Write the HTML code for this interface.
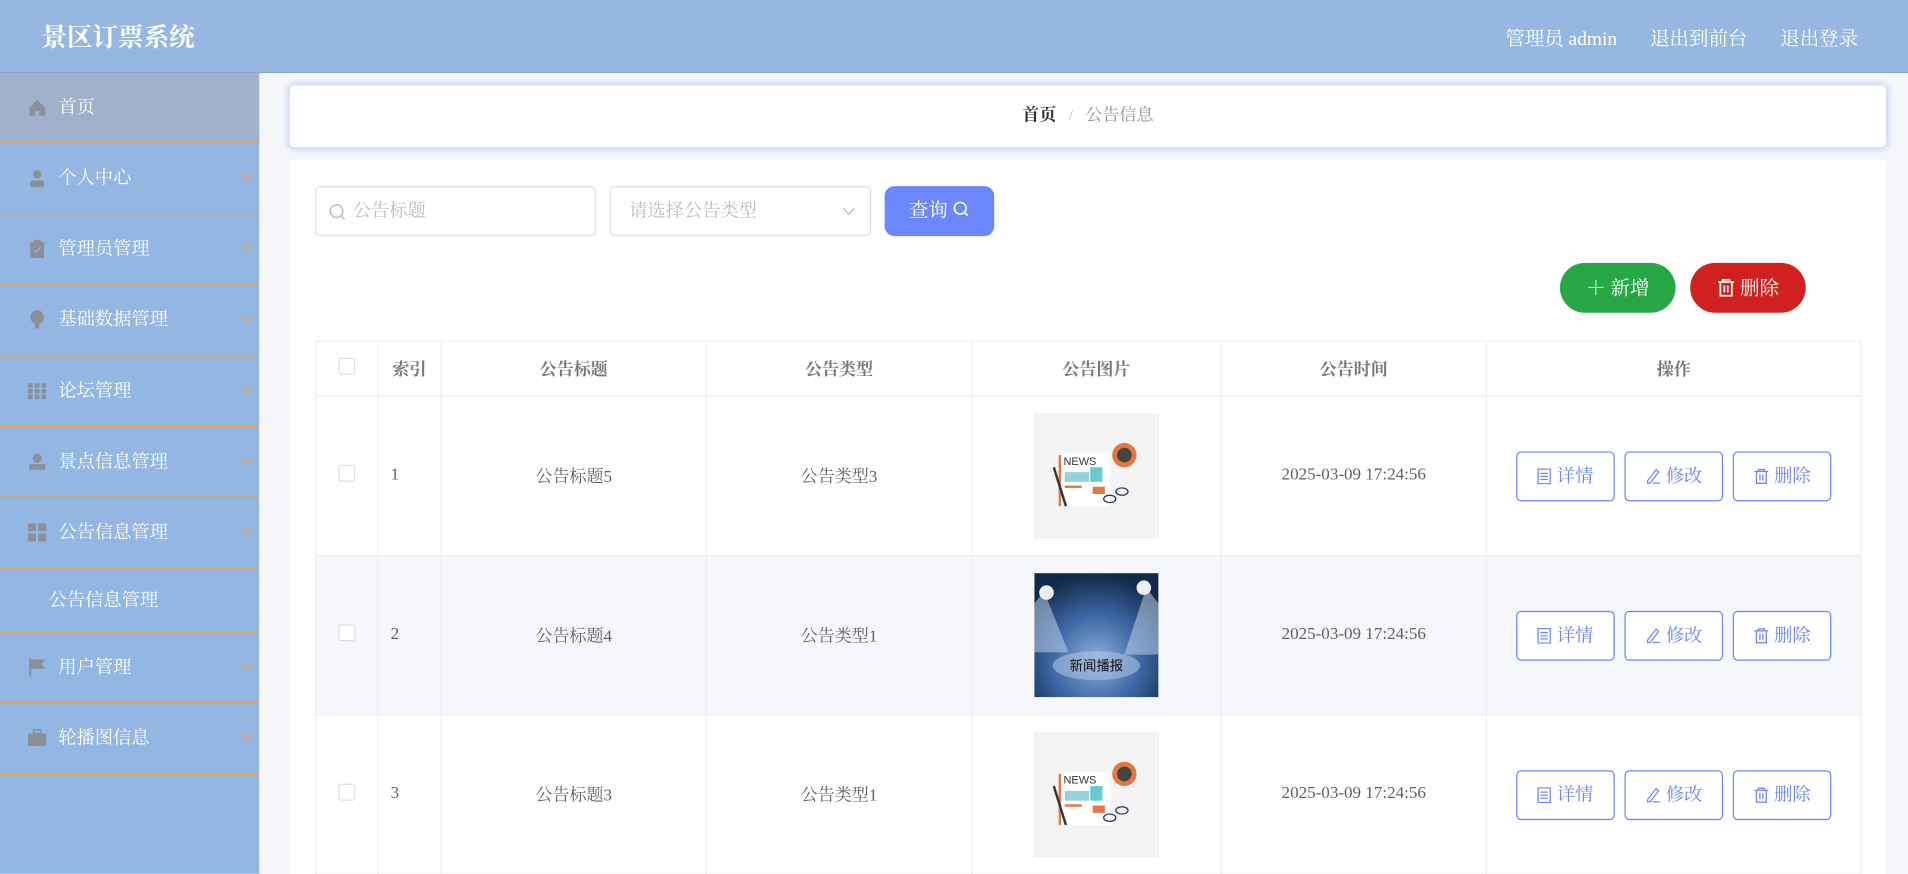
<!DOCTYPE html>
<html><head><meta charset="utf-8"><style>
*{box-sizing:border-box;margin:0;padding:0}
html,body{width:1908px;height:874px;overflow:hidden;background:#f4f6fa}
#w{width:1568px;height:718px;transform:scale(1.21684);transform-origin:0 0;position:relative;font-family:"Liberation Serif","Noto Serif CJK SC",serif;color:#606266}
.hd{position:absolute;left:0;top:0;width:1568px;height:60px;background:#95b7e2;border-bottom:1px solid #8aa5cc}
.hd .t{position:absolute;left:34px;top:15px;font-size:21px;font-weight:bold;color:#fff}
.hd .r{position:absolute;top:19px;font-size:16px;color:#fff}
.sb{position:absolute;left:0;top:60px;width:213px;height:658px;background:#93b6e2}
.it{height:58.4px;border-bottom:1px solid #f0a040;position:relative;color:#fff;font-size:15px;line-height:58px;padding-left:48px}
.it.a{background:#a1b1cb;height:57.5px}
.it .ic{position:absolute;left:23px;top:21px;width:15px;height:15px}
.it .ch{position:absolute;right:6px;top:22px;width:7px;height:7px;border-right:1px solid #f0a040;border-bottom:1px solid #f0a040;transform:rotate(45deg)}
.it .ch.u{transform:rotate(-135deg);top:26px}
.sub{height:52px;line-height:52px;padding-left:40px;color:#fff;font-size:15px;border-bottom:1px solid #f0a040}
.bc{position:absolute;left:238px;top:70px;width:1312px;height:51px;background:#fff;border-radius:4px;box-shadow:0 0 6px #a8b4f8;text-align:center;line-height:51px;font-size:14px}
.card{position:absolute;left:238px;top:132px;width:1312px;height:600px;background:#fff}
.inp{position:absolute;top:153px;height:41px;border:1px solid #dcdfe6;border-radius:4px;background:#fff;font-size:15px;color:#b8bcc4;line-height:41px}
.btn{position:absolute;color:#fff;font-size:16px;text-align:center}
table{position:absolute;left:259px;top:280px;width:1271px;border-collapse:collapse;font-size:14px}
td,th{border:1px solid #ebeef5;text-align:center;color:#606266}
th{height:45px;font-weight:bold;color:#777}
td{height:131px}
tr.g td{background:#f5f7fa}
.cb{display:inline-block;width:14px;height:14px;border:1px solid #dcdfe6;border-radius:2px;background:#fff}
.ops{font-size:0;white-space:nowrap}
.ob{display:inline-block;width:81px;height:41px;border:1px solid #6c84f8;border-radius:4px;color:#6c84f8;font-size:15px;line-height:41px;margin:0 4px;background:#fff}
.ob svg{vertical-align:-2px;margin-right:4px}
.img{display:inline-block;width:102px;height:102px;vertical-align:middle}
</style></head><body><div id="w">
<div class="hd"><div class="t">景区订票系统</div>
<div class="r" style="left:1237px">管理员 admin</div><div class="r" style="left:1356px">退出到前台</div><div class="r" style="left:1463px">退出登录</div></div>
<div class="sb">
<div class="it a"><svg class="ic" viewBox="0 0 16 16"><path d="M1 8L8 1l7 7v7H10v-4H6v4H1z" fill="#8a8f99"/></svg>首页</div>
<div class="it"><svg class="ic" viewBox="0 0 16 16"><circle cx="8" cy="4.5" r="3.5" fill="#8a8f99"/><rect x="2" y="10" width="12" height="6" rx="2" fill="#8a8f99"/></svg>个人中心<i class="ch"></i></div>
<div class="it"><svg class="ic" viewBox="0 0 16 16"><rect x="2" y="2" width="12" height="14" fill="#8a8f99"/><rect x="5" y="0" width="6" height="3" fill="#8a8f99"/><path d="M5 9l2 2 4-4" stroke="#a0b4d0" fill="none"/></svg>管理员管理<i class="ch"></i></div>
<div class="it"><svg class="ic" viewBox="0 0 16 16"><ellipse cx="8" cy="6" rx="6" ry="6" fill="#8a8f99"/><rect x="6" y="12" width="4" height="4" fill="#8a8f99"/></svg>基础数据管理<i class="ch"></i></div>
<div class="it"><svg class="ic" viewBox="0 0 16 16" fill="#8a8f99"><rect x="0" y="1" width="4" height="4"/><rect x="6" y="1" width="4" height="4"/><rect x="12" y="1" width="4" height="4"/><rect x="0" y="6" width="4" height="4"/><rect x="6" y="6" width="4" height="4"/><rect x="12" y="6" width="4" height="4"/><rect x="0" y="11" width="4" height="4"/><rect x="6" y="11" width="4" height="4"/><rect x="12" y="11" width="4" height="4"/></svg>论坛管理<i class="ch"></i></div>
<div class="it"><svg class="ic" viewBox="0 0 16 16" fill="#8a8f99"><circle cx="8" cy="5" r="4"/><rect x="1" y="10" width="14" height="5"/></svg>景点信息管理<i class="ch"></i></div>
<div class="it"><svg class="ic" viewBox="0 0 16 16" fill="#8a8f99"><rect x="0" y="0" width="7" height="7"/><rect x="9" y="0" width="7" height="7"/><rect x="0" y="9" width="7" height="7"/><rect x="9" y="9" width="7" height="7"/></svg>公告信息管理<i class="ch u"></i></div>
<div class="sub">公告信息管理</div>
<div class="it"><svg class="ic" viewBox="0 0 16 16" fill="#8a8f99"><rect x="1" y="0" width="2" height="16"/><path d="M3 1h12l-3 4 3 4H3z"/></svg>用户管理<i class="ch"></i></div>
<div class="it"><svg class="ic" viewBox="0 0 16 16" fill="#8a8f99"><rect x="0" y="4" width="16" height="11" rx="1"/><rect x="5" y="1" width="6" height="3" fill="none" stroke="#8a8f99" stroke-width="1.5"/></svg>轮播图信息<i class="ch"></i></div>
</div>
<div class="bc"><b style="color:#303133">首页</b><span style="color:#c0c4cc;margin:0 10px">/</span><span style="color:#909399">公告信息</span></div>
<div class="card"></div>
<div class="inp" style="left:259px;width:231px;padding-left:30px"><svg style="position:absolute;left:10px;top:13px" width="15" height="15" viewBox="0 0 16 16"><circle cx="7" cy="7" r="5.5" stroke="#b8bcc4" stroke-width="1.3" fill="none"/><path d="M11 11l3 3" stroke="#b8bcc4" stroke-width="1.3"/></svg>公告标题</div>
<div class="inp" style="left:501px;width:215px;padding-left:15px">请选择公告类型<i style="position:absolute;right:14px;top:14px;width:7px;height:7px;border-right:1px solid #b8bcc4;border-bottom:1px solid #b8bcc4;transform:rotate(45deg)"></i></div>
<div class="btn" style="left:727px;top:153px;width:90px;height:41px;line-height:41px;background:#6b87fb;border-radius:8px">查询 <svg width="14" height="14" viewBox="0 0 16 16" style="vertical-align:-1px"><circle cx="7" cy="7" r="5.5" stroke="#fff" stroke-width="1.5" fill="none"/><path d="M11 11l3 3" stroke="#fff" stroke-width="1.5"/></svg></div>
<div class="btn" style="left:1282px;top:216px;width:95px;height:41px;line-height:43px;background:#27a745;border-radius:21px">＋ 新增</div>
<div class="btn" style="left:1389px;top:216px;width:95px;height:41px;line-height:43px;background:#d02020;border-radius:21px"><svg width="15" height="15" viewBox="0 0 16 16" style="vertical-align:-2px"><path d="M1 3h14M5 3V1h6v2M3 3v12h10V3M6.5 6v6M9.5 6v6" stroke="#fff" stroke-width="1.5" fill="none"/></svg> 删除</div>
<table>
<tr><th style="width:51px"><span class="cb"></span></th><th style="width:52px">索引</th><th style="width:218px">公告标题</th><th style="width:218px">公告类型</th><th style="width:205px">公告图片</th><th style="width:218px">公告时间</th><th>操作</th></tr>
<tr><td><span class="cb"></span></td><td style="text-align:left;padding-left:10px">1</td><td>公告标题5</td><td>公告类型3</td><td><svg class="img" viewBox="0 0 102 102"><rect width="102" height="102" fill="#f4f4f4" stroke="#e4e4e4"/><rect x="22" y="32" width="40" height="44" fill="#fff"/><rect x="20" y="34" width="2" height="42" fill="#e57840"/><text x="24" y="42" font-size="9" font-family="Liberation Sans" fill="#333">NEWS</text><rect x="25" y="48" width="20" height="8" fill="#93d3dc"/><rect x="25" y="59" width="14" height="2" fill="#e57840"/><rect x="46" y="44" width="10" height="12" fill="#6cc"/><rect x="48" y="60" width="10" height="6" fill="#e57840"/><circle cx="74" cy="34" r="10" fill="#e57840"/><circle cx="74" cy="34" r="6" fill="#444"/><path d="M16 44l10 32" stroke="#334" stroke-width="2"/><ellipse cx="62" cy="70" rx="5" ry="3" fill="none" stroke="#235"/><ellipse cx="72" cy="64" rx="5" ry="3" fill="none" stroke="#235"/></svg></td><td>2025-03-09 17:24:56</td><td class="ops"><span class="ob"><svg width="12" height="13" viewBox="0 0 12 13"><rect x="1" y="0.5" width="10" height="12" fill="none" stroke="#6c84f8"/><path d="M3 4h6M3 6.5h6M3 9h6" stroke="#6c84f8"/></svg>详情</span><span class="ob"><svg width="13" height="13" viewBox="0 0 13 13"><path d="M2 10L9 1l2 2-7 9H2zM6 12h6" stroke="#6c84f8" fill="none"/></svg>修改</span><span class="ob"><svg width="13" height="13" viewBox="0 0 16 16"><path d="M1 3h14M5 3V1h6v2M3 3v12h10V3M6.5 6v6M9.5 6v6" stroke="#6c84f8" stroke-width="1.3" fill="none"/></svg>删除</span></td></tr>
<tr class="g"><td><span class="cb"></span></td><td style="text-align:left;padding-left:10px">2</td><td>公告标题4</td><td>公告类型1</td><td><svg class="img" viewBox="0 0 102 102"><defs><radialGradient id="r" cx="50%" cy="70%" r="70%"><stop offset="0" stop-color="#8fb0d8"/><stop offset=".5" stop-color="#3f6aa8"/><stop offset="1" stop-color="#112848"/></radialGradient></defs><rect width="102" height="102" fill="url(#r)"/><path d="M8 15l20 50H0V25z" fill="#c8dcf0" opacity=".5"/><path d="M92 12l-18 55h28V25z" fill="#c8dcf0" opacity=".5"/><circle cx="10" cy="16" r="6" fill="#eee"/><circle cx="90" cy="12" r="6" fill="#eee"/><ellipse cx="51" cy="76" rx="36" ry="12" fill="#a8c0e0" opacity=".6"/><text x="51" y="80" font-size="11" text-anchor="middle" fill="#111" font-family="Noto Sans CJK SC">新闻播报</text></svg></td><td>2025-03-09 17:24:56</td><td class="ops"><span class="ob"><svg width="12" height="13" viewBox="0 0 12 13"><rect x="1" y="0.5" width="10" height="12" fill="none" stroke="#6c84f8"/><path d="M3 4h6M3 6.5h6M3 9h6" stroke="#6c84f8"/></svg>详情</span><span class="ob"><svg width="13" height="13" viewBox="0 0 13 13"><path d="M2 10L9 1l2 2-7 9H2zM6 12h6" stroke="#6c84f8" fill="none"/></svg>修改</span><span class="ob"><svg width="13" height="13" viewBox="0 0 16 16"><path d="M1 3h14M5 3V1h6v2M3 3v12h10V3M6.5 6v6M9.5 6v6" stroke="#6c84f8" stroke-width="1.3" fill="none"/></svg>删除</span></td></tr>
<tr><td><span class="cb"></span></td><td style="text-align:left;padding-left:10px">3</td><td>公告标题3</td><td>公告类型1</td><td><svg class="img" viewBox="0 0 102 102"><rect width="102" height="102" fill="#f4f4f4" stroke="#e4e4e4"/><rect x="22" y="32" width="40" height="44" fill="#fff"/><rect x="20" y="34" width="2" height="42" fill="#e57840"/><text x="24" y="42" font-size="9" font-family="Liberation Sans" fill="#333">NEWS</text><rect x="25" y="48" width="20" height="8" fill="#93d3dc"/><rect x="25" y="59" width="14" height="2" fill="#e57840"/><rect x="46" y="44" width="10" height="12" fill="#6cc"/><rect x="48" y="60" width="10" height="6" fill="#e57840"/><circle cx="74" cy="34" r="10" fill="#e57840"/><circle cx="74" cy="34" r="6" fill="#444"/><path d="M16 44l10 32" stroke="#334" stroke-width="2"/><ellipse cx="62" cy="70" rx="5" ry="3" fill="none" stroke="#235"/><ellipse cx="72" cy="64" rx="5" ry="3" fill="none" stroke="#235"/></svg></td><td>2025-03-09 17:24:56</td><td class="ops"><span class="ob"><svg width="12" height="13" viewBox="0 0 12 13"><rect x="1" y="0.5" width="10" height="12" fill="none" stroke="#6c84f8"/><path d="M3 4h6M3 6.5h6M3 9h6" stroke="#6c84f8"/></svg>详情</span><span class="ob"><svg width="13" height="13" viewBox="0 0 13 13"><path d="M2 10L9 1l2 2-7 9H2zM6 12h6" stroke="#6c84f8" fill="none"/></svg>修改</span><span class="ob"><svg width="13" height="13" viewBox="0 0 16 16"><path d="M1 3h14M5 3V1h6v2M3 3v12h10V3M6.5 6v6M9.5 6v6" stroke="#6c84f8" stroke-width="1.3" fill="none"/></svg>删除</span></td></tr>
</table>
</div></body></html>
